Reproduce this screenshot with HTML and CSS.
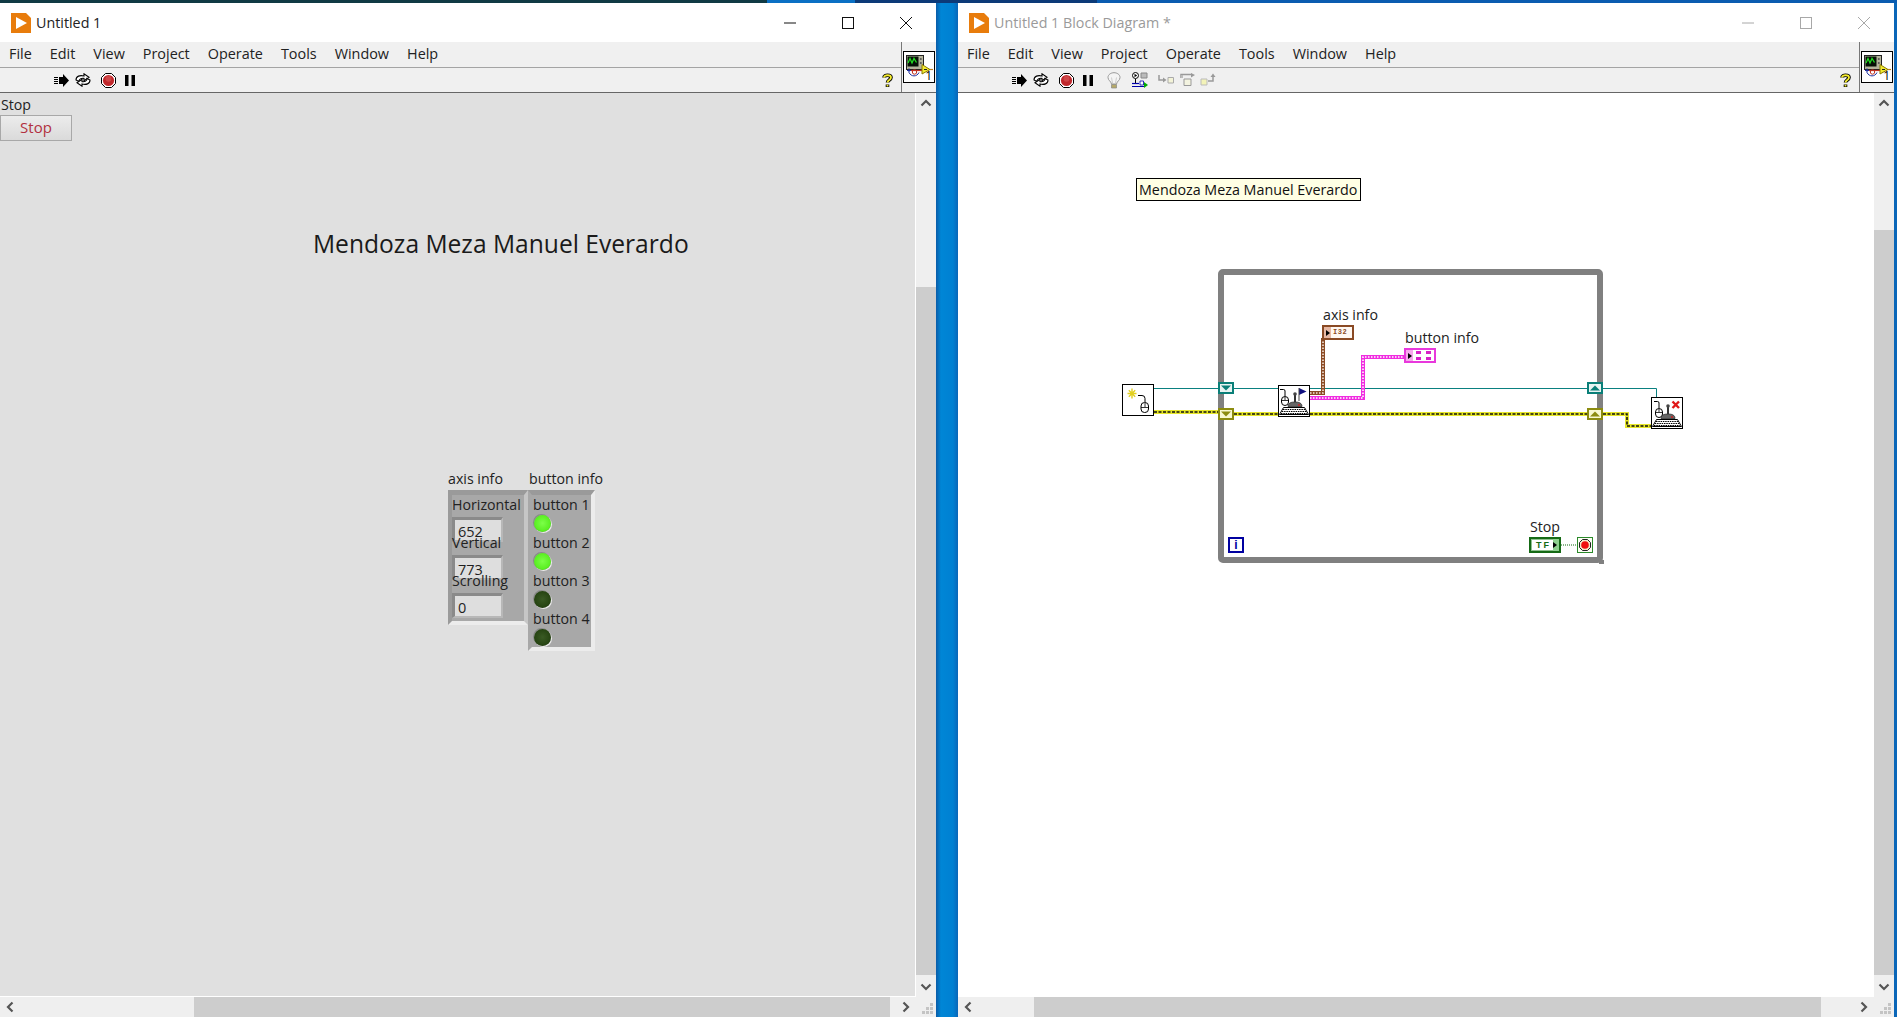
FILE: index.html
```html
<!DOCTYPE html>
<html lang="en">
<head>
<meta charset="utf-8">
<title>Untitled 1</title>
<link rel="stylesheet" href="styles.css">
</head>
<body>
<svg class="defs" width="0" height="0" aria-hidden="true">
  <defs>
    <symbol id="logo" viewBox="0 0 20 20"><path d="M0 0H15L20 5V20H0Z" fill="#e87c0c"/><path d="M5 4L16 10L5 16Z" fill="#fff"/></symbol>
    <symbol id="run" viewBox="0 0 15 13"><path d="M5 3H9V0L15 6.5L9 13V10H5Z" fill="#000"/><path d="M0 3.5H4M0 5.5H4M0 7.5H4M0 9.5H4" stroke="#000" stroke-width="1"/></symbol>
    <symbol id="cycle" viewBox="0 0 16 14"><path d="M1 7C1 3 5 2 9 3V0.8L14 4.2L9 7.6V5.4C6 5 4 6 4 8.5Z" fill="#fff" stroke="#000" stroke-width="1.1"/><path d="M15 7C15 11 11 12 7 11V13.2L2 9.8L7 6.4V8.6C10 9 12 8 12 5.5Z" fill="#fff" stroke="#000" stroke-width="1.1"/></symbol>
    <symbol id="abort" viewBox="0 0 15 15"><path d="M4.5 .5H10.5L14.5 4.5V10.5L10.5 14.5H4.5L.5 10.5V4.5Z" fill="#fff" stroke="#000"/><circle cx="7.5" cy="7.5" r="5.6" fill="#c0282c"/><circle cx="7.5" cy="5.8" r="3" fill="#d85a5c" opacity=".6"/></symbol>
    <symbol id="pause" viewBox="0 0 10 11"><path d="M0 0H3.5V11H0ZM6.5 0H10V11H6.5Z" fill="#000"/></symbol>
    <symbol id="bulb" viewBox="0 0 14 17"><path d="M4.5 12C4 9 1 8.500 1 5.500C1 2.500 4 .7 7 .7S13 2.500 13 5.500C13 8.500 10 9 9.500 12Z" fill="#f4f4f4" stroke="#999"/><path d="M4.500 12.500H9.500V16H4.500Z" fill="#b5a96a" stroke="#888" stroke-width=".7"/><path d="M5.500 11L4.500 5.500M8.500 11L9.500 5.500" stroke="#bbb" stroke-width=".7"/></symbol>
    <symbol id="retain" viewBox="0 0 16 16"><circle cx="3.500" cy="3.500" r="3" fill="#fff" stroke="#000"/><path d="M2.500 1.800L5.200 3.500L2.500 5.200Z" fill="#000"/><path d="M9 1H15V6H9Z" fill="#bbb" stroke="#888"/><path d="M3.500 7V11" stroke="#000"/><path d="M0 11.500H7" stroke="#00a" stroke-width="1.200"/><path d="M8 9H11.500V13H8Z" fill="#fff" stroke="#00a" stroke-width=".8"/><path d="M0 14.500H12" stroke="#00a" stroke-width="1"/><path d="M12 10L16 13L12 16Z" fill="#0a0"/></symbol>
    <symbol id="stepin" viewBox="0 0 16 12"><path d="M1 1V6H6" fill="none" stroke="#999" stroke-width="1.500"/><path d="M5 3.500L8.500 6L5 8.500Z" fill="#999"/><path d="M10 3.500H15.500V9H10Z" fill="#f3f3d8" stroke="#aaa"/></symbol>
    <symbol id="stepover" viewBox="0 0 16 14"><path d="M1 5V1.500H12" fill="none" stroke="#999" stroke-width="1.500"/><path d="M11 0L15 2L11 4.500Z" fill="#999"/><path d="M4 6H11V12.500H4Z" fill="#f3f3e0" stroke="#999"/><path d="M1 2H3V5H1Z" fill="#bbb"/></symbol>
    <symbol id="stepout" viewBox="0 0 16 14"><path d="M1 6H7V12H1Z" fill="#f3f3b8" stroke="#bbb"/><path d="M8 8H13V3" fill="none" stroke="#999" stroke-width="1.500"/><path d="M10.500 4L13 .5L15.500 4Z" fill="#999"/></symbol>
    <symbol id="help" viewBox="0 0 11 15"><path d="M2 4.500C2 1.500 9 1.500 9 4.500C9 7 5.500 6.800 5.500 9.500" fill="none" stroke="#000" stroke-width="3.600"/><path d="M5.500 11.500V14" stroke="#000" stroke-width="3.600"/><path d="M2 4.500C2 1.500 9 1.500 9 4.500C9 7 5.500 6.800 5.500 9.500" fill="none" stroke="#f5ec2c" stroke-width="1.800"/><path d="M5.500 11.800V13.500" stroke="#f5ec2c" stroke-width="1.800"/></symbol>
    <symbol id="vi-front" viewBox="0 0 30 30"><rect x="2.500" y="3.500" width="17" height="14" fill="#b4b49c" stroke="#222"/><rect x="3.500" y="4.500" width="11" height="10" fill="#061006"/><path d="M4 11L6 6.500L8 11L10 6.500L12.500 10.500" fill="none" stroke="#22dd22" stroke-width="1.300"/><circle cx="16.800" cy="7" r="1" fill="#555"/><circle cx="16.800" cy="11" r="1" fill="#555"/><path d="M3 18.500H7M5 16.500V20.500" stroke="#2030a0" stroke-width="1.200"/><path d="M7 18.500H19" stroke="#c03020" stroke-width="1.200"/><path d="M5 20.500C7 25 13 25 15 20.500" fill="none" stroke="#2030a0"/><circle cx="10.500" cy="20" r="2.200" fill="none" stroke="#c03020"/><path d="M18 12.500L26 17.500L18 22Z" fill="#f2ea30" stroke="#8a7a00"/><path d="M20 17.500H23" stroke="#222"/><path d="M26 17.500H29" stroke="#c08020" stroke-width="1.200"/></symbol>
    <g id="mouse"><path d="M3 1.500H6.500Q8 1.500 8 3V8" fill="none" stroke="#000"/><rect x="4.500" y="8.500" width="7" height="9" rx="3.500" fill="#fff" stroke="#000"/><path d="M8 9V12M4.500 12.500H11.500" stroke="#000" stroke-width=".8"/></g>
    <g id="keyboard"><path d="M5.500 22.500H26.500L30.500 29.500H1.500Z" fill="#fff" stroke="#000"/><path d="M5 24.500H27M3.800 26.500H28.200M3 28.500H29" stroke="#000" stroke-dasharray="1.500 .8"/></g>
    <g id="stick"><path d="M10 21.500C10 18 13 17 17 17S24 18 24 21.500Z" fill="#666" stroke="#222" stroke-width=".7"/><path d="M17 8.500V17" stroke="#333" stroke-width="2"/><circle cx="17" cy="9" r="1.800" fill="#444"/><circle cx="21" cy="20" r="1" fill="#d02020"/></g>
    <symbol id="vi-init" viewBox="0 0 32 32"><rect x=".5" y=".5" width="31" height="31" fill="#fff" stroke="#000"/><path d="M10 4.500V14.500M5.500 9.500H14.500M6.800 6.300L13.200 12.700M6.800 12.700L13.200 6.300" stroke="#e2cf20" stroke-width="1.400"/><g transform="translate(15 10)"><path d="M1 1.500H5Q8 1.500 8 4.500V8" fill="none" stroke="#000"/><rect x="4" y="8.500" width="7.500" height="10" rx="3.500" fill="#fff" stroke="#000"/><path d="M8 9V13M4 13.500H11.500" stroke="#000" stroke-width=".8"/></g></symbol>
    <symbol id="vi-acquire" viewBox="0 0 32 32"><rect x=".5" y=".5" width="31" height="31" fill="#fff" stroke="#000"/><use href="#mouse" transform="translate(-1 3)"/><use href="#stick"/><path d="M21 3L28.500 6.500L21 10Z" fill="#101080"/><path d="M21 3V16" stroke="#444"/><use href="#keyboard"/></symbol>
    <symbol id="vi-close" viewBox="0 0 32 32"><rect x=".5" y=".5" width="31" height="31" fill="#fff" stroke="#000"/><use href="#mouse" transform="translate(0 3)"/><use href="#stick"/><path d="M21.500 4.500L28 11M28 4.500L21.500 11" stroke="#e01818" stroke-width="2.400"/><use href="#keyboard"/></symbol>
    <symbol id="cond" viewBox="0 0 16 16"><rect x=".5" y=".5" width="15" height="15" fill="#fdfdf4" stroke="#2a8a2a"/><path d="M5.500 2.500H10.500L13.500 5.500V10.500L10.500 13.500H5.500L2.500 10.500V5.500Z" fill="#f4e8c8" stroke="#222"/><circle cx="8" cy="8" r="3.800" fill="#f01010"/></symbol>
    <symbol id="tun-down" viewBox="0 0 12 8"><path d="M1 1.500H11L6 6.500Z"/></symbol>
    <symbol id="tun-up" viewBox="0 0 12 8"><path d="M1 6.500H11L6 1.500Z"/></symbol>
    <symbol id="up" viewBox="0 0 12 8"><path d="M1.500 6.500L6 2L10.500 6.500" fill="none" stroke="#555" stroke-width="2.200"/></symbol>
    <symbol id="down" viewBox="0 0 12 8"><path d="M1.500 1.500L6 6L10.500 1.500" fill="none" stroke="#555" stroke-width="2.200"/></symbol>
    <symbol id="left" viewBox="0 0 8 12"><path d="M6.500 1.500L2 6L6.500 10.500" fill="none" stroke="#555" stroke-width="2.200"/></symbol>
    <symbol id="right" viewBox="0 0 8 12"><path d="M1.500 1.500L6 6L1.500 10.500" fill="none" stroke="#555" stroke-width="2.200"/></symbol>
  </defs>
</svg>
<main class="desktop">
  <section class="window">
    <header class="titlebar">
      <svg class="logo"><use href="#logo"/></svg>
      <span class="title">Untitled 1</span>
      <div class="caps">
        <svg class="cap" viewBox="0 0 12 12"><path d="M0 6H12" stroke="currentColor"/></svg>
        <svg class="cap" viewBox="0 0 12 12"><rect x=".5" y=".5" width="11" height="11" fill="none" stroke="currentColor"/></svg>
        <svg class="cap" viewBox="0 0 12 12"><path d="M0 0L12 12M12 0L0 12" stroke="currentColor"/></svg>
      </div>
    </header>
    <div class="chrome">
      <div class="chrome-main">
        <nav class="menubar"><span>File</span><span>Edit</span><span>View</span><span>Project</span><span>Operate</span><span>Tools</span><span>Window</span><span>Help</span></nav>
        <div class="toolbar">
          <svg class="t-run"><use href="#run"/></svg>
          <svg class="t-cycle"><use href="#cycle"/></svg>
          <svg class="t-abort"><use href="#abort"/></svg>
          <svg class="t-pause"><use href="#pause"/></svg>
          <svg class="t-help"><use href="#help"/></svg>
        </div>
      </div>
      <div class="chrome-pane"><div class="vi-icon"><svg class="vi-art"><use href="#vi-front"/></svg><span class="vi-num">1</span></div></div>
    </div>
    <div class="work">
      <div class="canvas panel">
        <span class="lbl stop-lbl">Stop</span>
        <button class="stop-btn" type="button">Stop</button>
        <h1 class="heading">Mendoza Meza Manuel Everardo</h1>
        <div class="group">
          <div class="col-axis">
            <span class="lbl">axis info</span>
            <div class="cluster axis">
              <div class="field"><span class="lbl">Horizontal</span><div class="num">652</div></div>
              <div class="field"><span class="lbl">Vertical</span><div class="num">773</div></div>
              <div class="field"><span class="lbl">Scrolling</span><div class="num">0</div></div>
            </div>
          </div>
          <div class="col-btn">
            <span class="lbl btn-title">button info</span>
            <div class="cluster buttons">
              <div class="bfield"><span class="lbl">button 1</span><div class="led on"></div></div>
              <div class="bfield"><span class="lbl">button 2</span><div class="led on"></div></div>
              <div class="bfield"><span class="lbl">button 3</span><div class="led"></div></div>
              <div class="bfield"><span class="lbl">button 4</span><div class="led"></div></div>
            </div>
          </div>
        </div>
      </div>
      <div class="vbar">
        <div class="arrow"><svg class="ar-v"><use href="#up"/></svg></div>
        <div class="vtrack"><div class="vthumb front"></div></div>
        <div class="arrow"><svg class="ar-v"><use href="#down"/></svg></div>
      </div>
    </div>
    <div class="hbar">
      <div class="arrow"><svg class="ar-h"><use href="#left"/></svg></div>
      <div class="htrack"><div class="hthumb front"></div></div>
      <div class="arrow"><svg class="ar-h"><use href="#right"/></svg></div>
      <svg class="grip" viewBox="0 0 20 20"><path d="M14 6h3v3h-3zM10 10h3v3h-3zM14 10h3v3h-3zM6 14h3v3H6zM10 14h3v3h-3zM14 14h3v3h-3z" fill="#c4c4c4"/></svg>
    </div>
  </section>

  <section class="window inactive">
    <header class="titlebar">
      <svg class="logo"><use href="#logo"/></svg>
      <span class="title">Untitled 1 Block Diagram *</span>
      <div class="caps">
        <svg class="cap" viewBox="0 0 12 12"><path d="M0 6H12" stroke="currentColor"/></svg>
        <svg class="cap" viewBox="0 0 12 12"><rect x=".5" y=".5" width="11" height="11" fill="none" stroke="currentColor"/></svg>
        <svg class="cap" viewBox="0 0 12 12"><path d="M0 0L12 12M12 0L0 12" stroke="currentColor"/></svg>
      </div>
    </header>
    <div class="chrome">
      <div class="chrome-main">
        <nav class="menubar"><span>File</span><span>Edit</span><span>View</span><span>Project</span><span>Operate</span><span>Tools</span><span>Window</span><span>Help</span></nav>
        <div class="toolbar">
          <svg class="t-run"><use href="#run"/></svg>
          <svg class="t-cycle"><use href="#cycle"/></svg>
          <svg class="t-abort"><use href="#abort"/></svg>
          <svg class="t-pause"><use href="#pause"/></svg>
          <svg class="t-bulb"><use href="#bulb"/></svg>
          <svg class="t-retain"><use href="#retain"/></svg>
          <svg class="t-step1"><use href="#stepin"/></svg>
          <svg class="t-step2"><use href="#stepover"/></svg>
          <svg class="t-step3"><use href="#stepout"/></svg>
          <svg class="t-help"><use href="#help"/></svg>
        </div>
      </div>
      <div class="chrome-pane"><div class="vi-icon"><svg class="vi-art"><use href="#vi-front"/></svg><span class="vi-num">1</span></div></div>
    </div>
    <div class="work">
      <div class="canvas diagram">
        <div class="note">Mendoza Meza Manuel Everardo</div>
        <div class="loop"><span class="handle"></span></div>
        <svg class="wires" viewBox="0 0 916 903">
          <path class="w-teal" d="M196 295.500H260M276 295.500H629M645 295.500H698.500V304"/>
          <path class="w-y1" d="M196 319H260M276 321H320M352 321H629M645 321H669V333H693"/>
          <path class="w-y2" d="M196 319H260M276 321H320M352 321H629M645 321H669V333H693"/>
          <path class="w-b1" d="M352 300H365V245"/>
          <path class="w-b2" d="M352 300H365V245"/>
          <path class="w-p1" d="M352 305H405V264H446"/>
          <path class="w-p2" d="M352 305H405V264H446"/>
          <path class="w-g" d="M603 452H619"/>
        </svg>
        <svg class="tunnel teal t1"><use href="#tun-down"/></svg>
        <svg class="tunnel olive t2"><use href="#tun-down"/></svg>
        <svg class="tunnel teal t3"><use href="#tun-up"/></svg>
        <svg class="tunnel olive t4"><use href="#tun-up"/></svg>
        <svg class="vi v1"><use href="#vi-init"/></svg>
        <svg class="vi v2"><use href="#vi-acquire"/></svg>
        <svg class="vi v3"><use href="#vi-close"/></svg>
        <span class="lbl l-axis">axis info</span>
        <div class="term brown"><i class="tip"></i><b class="tdata">I32</b></div>
        <span class="lbl l-btn">button info</span>
        <div class="term pink"><i class="tip"></i><span class="dots"><i></i><i></i><i></i><i></i></span></div>
        <span class="lbl l-stop">Stop</span>
        <div class="term green"><b class="tf">TF</b><i class="tip"></i></div>
        <svg class="cond"><use href="#cond"/></svg>
        <div class="iter">i</div>
      </div>
      <div class="vbar">
        <div class="arrow"><svg class="ar-v"><use href="#up"/></svg></div>
        <div class="vtrack"><div class="vthumb back"></div></div>
        <div class="arrow"><svg class="ar-v"><use href="#down"/></svg></div>
      </div>
    </div>
    <div class="hbar">
      <div class="arrow"><svg class="ar-h"><use href="#left"/></svg></div>
      <div class="htrack"><div class="hthumb back"></div></div>
      <div class="arrow"><svg class="ar-h"><use href="#right"/></svg></div>
      <svg class="grip" viewBox="0 0 20 20"><path d="M14 6h3v3h-3zM10 10h3v3h-3zM14 10h3v3h-3zM6 14h3v3H6zM10 14h3v3h-3zM14 14h3v3h-3z" fill="#c4c4c4"/></svg>
    </div>
  </section>
</main>
</body>
</html>
```
FILE: styles.css
```css
* { box-sizing: border-box; }
html, body { margin: 0; height: 100%; overflow: hidden; }
body {
  font-family: "Open Sans", "Noto Sans", sans-serif;
  font-size: 14px;
  color: #1e1e1e;
  background: linear-gradient(90deg, #0a5ca8 936px, #0086d6 941px, #0080d2 953px, #0a66b8 958px);
}
.defs { position: absolute; }
svg { display: block; }

.desktop {
  width: 1897px;
  height: 1017px;
  padding: 3px 3px 0 0;
  display: grid;
  grid-template-columns: 936px 936px;
  column-gap: 22px;
  background: linear-gradient(90deg, #103a44 0 767px, #0a70c4 767px 855px, #0c3a78 855px 1097px, #0a5cb0 1097px) top / 100% 3px no-repeat;
}
.window {
  display: grid;
  grid-template-rows: 39px 51px 904px 20px;
  min-width: 0;
  background: #f0f0f0;
}

/* title bar */
.titlebar {
  background: #fff;
  display: flex;
  align-items: center;
  padding-left: 11px;
}
.logo { width: 20px; height: 20px; }
.title { margin-left: 5px; padding-bottom: 1px; font-size: 14.3px; color: #222; }
.caps { margin-left: auto; display: flex; gap: 46px; padding-right: 24px; color: #111; }
.cap { width: 12px; height: 12px; }
.inactive .title { color: #9a9a9a; }
.inactive .caps { color: #a8a8a8; }

/* menu + toolbar */
.chrome { display: flex; border-bottom: 1px solid #666; }
.chrome-main { flex: 1; min-width: 0; display: grid; grid-template-rows: 26px 24px; }
.chrome-pane { width: 35px; border-left: 1px solid #777; padding: 9px 0 0 1px; }
.menubar {
  display: flex;
  gap: 18px;
  padding: 0 0 2px 9px;
  align-items: center;
  border-bottom: 1px solid #a4a4a4;
  font-size: 14.4px;
  color: #222;
}
.toolbar { display: flex; align-items: center; padding-left: 54px; }
.t-run { width: 15px; height: 13px; }
.t-cycle { width: 16px; height: 14px; margin-left: 6px; }
.t-abort { width: 15px; height: 15px; margin-left: 10px; }
.t-pause { width: 10px; height: 11px; margin-left: 9px; }
.t-bulb { width: 14px; height: 17px; margin-left: 14px; }
.t-retain { width: 16px; height: 16px; margin-left: 11px; }
.t-step1 { width: 16px; height: 12px; margin-left: 10px; }
.t-step2 { width: 16px; height: 14px; margin-left: 6px; }
.t-step3 { width: 16px; height: 14px; margin-left: 4px; }
.t-help { width: 11px; height: 15px; margin-left: auto; margin-right: 8px; }
.vi-icon { width: 32px; height: 32px; background: #fff; border: 1px solid #000; position: relative; }
.vi-art { width: 30px; height: 30px; }
.vi-num { position: absolute; right: 2px; bottom: -1px; font-size: 12px; line-height: 14px; color: #000; }

/* work area */
.work { display: grid; grid-template-columns: 916px 20px; min-height: 0; }
.canvas { position: relative; overflow: hidden; border-right: 1px solid #fff; border-bottom: 1px solid #fff; }
.panel { background: #e0e0e0; }
.diagram { background: #fff; }
.lbl { display: block; font-size: 14.2px; line-height: 18px; white-space: nowrap; color: #222; }

.vbar { display: grid; grid-template-rows: 20px 1fr 21px; background: #efefef; }
.vtrack { min-height: 0; }
.vthumb { width: 100%; background: #cdcdcd; }
.vthumb.front { margin-top: 174px; height: 688px; }
.vthumb.back { margin-top: 117px; height: 745px; }
.arrow { display: flex; align-items: center; justify-content: center; }
.ar-v { width: 12px; height: 8px; }
.ar-h { width: 8px; height: 12px; }

.hbar { display: grid; grid-template-columns: 20px 876px 20px 20px; background: #efefef; }
.htrack { min-width: 0; }
.hthumb { height: 100%; background: #cdcdcd; }
.hthumb.front { margin-left: 174px; width: 696px; }
.hthumb.back { margin-left: 56px; width: 787px; }
.grip { width: 20px; height: 20px; }

/* front panel */
.stop-lbl { position: absolute; left: 1px; top: 3px; }
.stop-btn {
  position: absolute;
  left: 0;
  top: 22px;
  width: 72px;
  height: 26px;
  padding: 0 0 2px;
  border: 1px solid #a8a8a8;
  background: linear-gradient(#ececec, #dadada);
  color: #b23040;
  font: 15px "Open Sans", sans-serif;
}
.heading {
  position: absolute;
  left: 313px;
  top: 133px;
  margin: 0;
  font-size: 24.6px;
  line-height: 36px;
  font-weight: 400;
  white-space: nowrap;
  color: #1a1a1a;
}
.group { position: absolute; left: 448px; top: 377px; display: flex; align-items: flex-start; }
.col-axis { width: 80px; }
.col-btn { width: 67px; }
.btn-title { margin-left: 1px; }
.group > div > .lbl { height: 20px; }
.cluster {
  background: #a8a8a8;
  border-style: solid;
  border-width: 5px 4px 4px 4px;
  border-color: #9a9a9a #ececec #ececec #9a9a9a;
  padding-top: 1px;
}
.axis { height: 135px; border-right-color: #c6c6c6; }
.buttons { height: 161px; padding-left: 1px; border-left-color: #a8a8a8; }
.field { height: 38px; }
.field .lbl { height: 21px; }
.num {
  width: 51px;
  height: 25px;
  padding: 3px 0 0 3px;
  line-height: 18px;
  font-size: 14.5px;
  background: #dedede;
  border-style: solid;
  border-width: 3px 2px 2px 3px;
  border-color: #8a8a8a #b8b8b8 #b8b8b8 #8a8a8a;
}
.bfield { height: 38px; }
.bfield .lbl { height: 19px; }
.led {
  width: 17px;
  height: 17px;
  margin-left: 1px;
  border-radius: 50%;
  background: radial-gradient(circle at 50% 48%, #7cff48 0, #5cf024 60%, #3eb018 100%);
  box-shadow: 1px 1px 0 #ececec, -1px -1px 0 #8a8a8a;
}
.led:not(.on) { background: radial-gradient(circle at 50% 48%, #3a5a24 0, #264412 65%, #16260a 100%); }

/* block diagram */
.note {
  position: absolute;
  left: 178px;
  top: 85px;
  width: 225px;
  height: 23px;
  padding-left: 2px;
  background: #ffffe4;
  border: 1px solid #000;
  line-height: 21px;
  font-size: 14.3px;
  white-space: nowrap;
  color: #111;
}
.loop {
  position: absolute;
  left: 260px;
  top: 176px;
  width: 385px;
  height: 294px;
  border: 6px solid #808080;
  border-radius: 5px;
}
.handle {
  position: absolute;
  right: -7px;
  bottom: -7px;
  width: 5px;
  height: 4px;
  background: #808080;
}
.wires { position: absolute; left: 0; top: 0; width: 916px; height: 903px; fill: none; }
.w-teal { stroke: #0a8080; stroke-width: 1; }
.w-y1 { stroke: #e6e62a; stroke-width: 4; }
.w-y2 { stroke: #111; stroke-width: 1.6; stroke-dasharray: 3 1.500; }
.w-b1 { stroke: #8a4a24; stroke-width: 4; }
.w-b2 { stroke: #f6e8dc; stroke-width: 1.6; stroke-dasharray: 1.500 1.500; }
.w-p1 { stroke: #f02ce0; stroke-width: 4; }
.w-p2 { stroke: #fff; stroke-width: 1.6; stroke-dasharray: 1.500 1.500; }
.w-g { stroke: #106a10; stroke-width: 1; stroke-dasharray: 1 1; }
.tunnel { position: absolute; width: 16px; height: 12px; border: 2px solid; }
.teal { border-color: #0a7f78; fill: #0a7f78; background: #e8f4f2; }
.olive { border-color: #8c8c10; fill: #8c8c10; background: #f8f8d0; }
.t1 { left: 260px; top: 289px; }
.t2 { left: 260px; top: 315px; }
.t3 { left: 629px; top: 289px; }
.t4 { left: 629px; top: 315px; }
.vi { position: absolute; width: 32px; height: 32px; }
.v1 { left: 164px; top: 291px; }
.v2 { left: 320px; top: 292px; }
.v3 { left: 693px; top: 304px; }
.l-axis { position: absolute; left: 365px; top: 213px; }
.l-btn { position: absolute; left: 447px; top: 236px; }
.l-stop { position: absolute; left: 572px; top: 425px; }
.term { position: absolute; width: 32px; height: 15px; display: flex; align-items: stretch; }
.term .tip { display: flex; align-items: center; }
.term .tip::before { content: ""; border: 3px solid transparent; border-left: 4px solid #000; border-right-width: 0; }
.brown { left: 364px; top: 232px; border: 2px solid #8a4a24; background: #fff8f2; }
.brown .tip { width: 7px; justify-content: center; background: #e6b8a4; }
.tdata { font: 700 7px/11px "Liberation Mono", monospace; color: #8a4a24; margin-left: 2px; letter-spacing: .5px; }
.pink { left: 446px; top: 255px; border: 2px solid #e838dc; background: #fff; }
.pink .tip { width: 7px; justify-content: center; background: #f6a8ec; }
.dots { display: grid; grid-template-columns: 5px 5px; justify-content: center; align-content: center; gap: 3px 5px; margin-left: 3px; }
.dots i { height: 3px; background: #d820c8; }
.green { left: 571px; top: 444px; height: 16px; border: 2px solid #156a15; background: #fff; justify-content: flex-end; box-shadow: inset 0 0 0 1px #8fc08f; }
.tf { align-self: center; font: 700 9px/9px "Liberation Sans", sans-serif; color: #156a15; letter-spacing: 2px; margin-right: 2px; }
.green .tip { width: 6px; justify-content: flex-start; background: #8fd08f; }
.cond { position: absolute; left: 619px; top: 444px; width: 16px; height: 16px; }
.iter {
  position: absolute;
  left: 270px;
  top: 444px;
  width: 16px;
  height: 16px;
  border: 2px solid #0000a0;
  background: #fff;
  color: #0000a0;
  font: 700 12px/12px "Liberation Sans", sans-serif;
  text-align: center;
}
```
